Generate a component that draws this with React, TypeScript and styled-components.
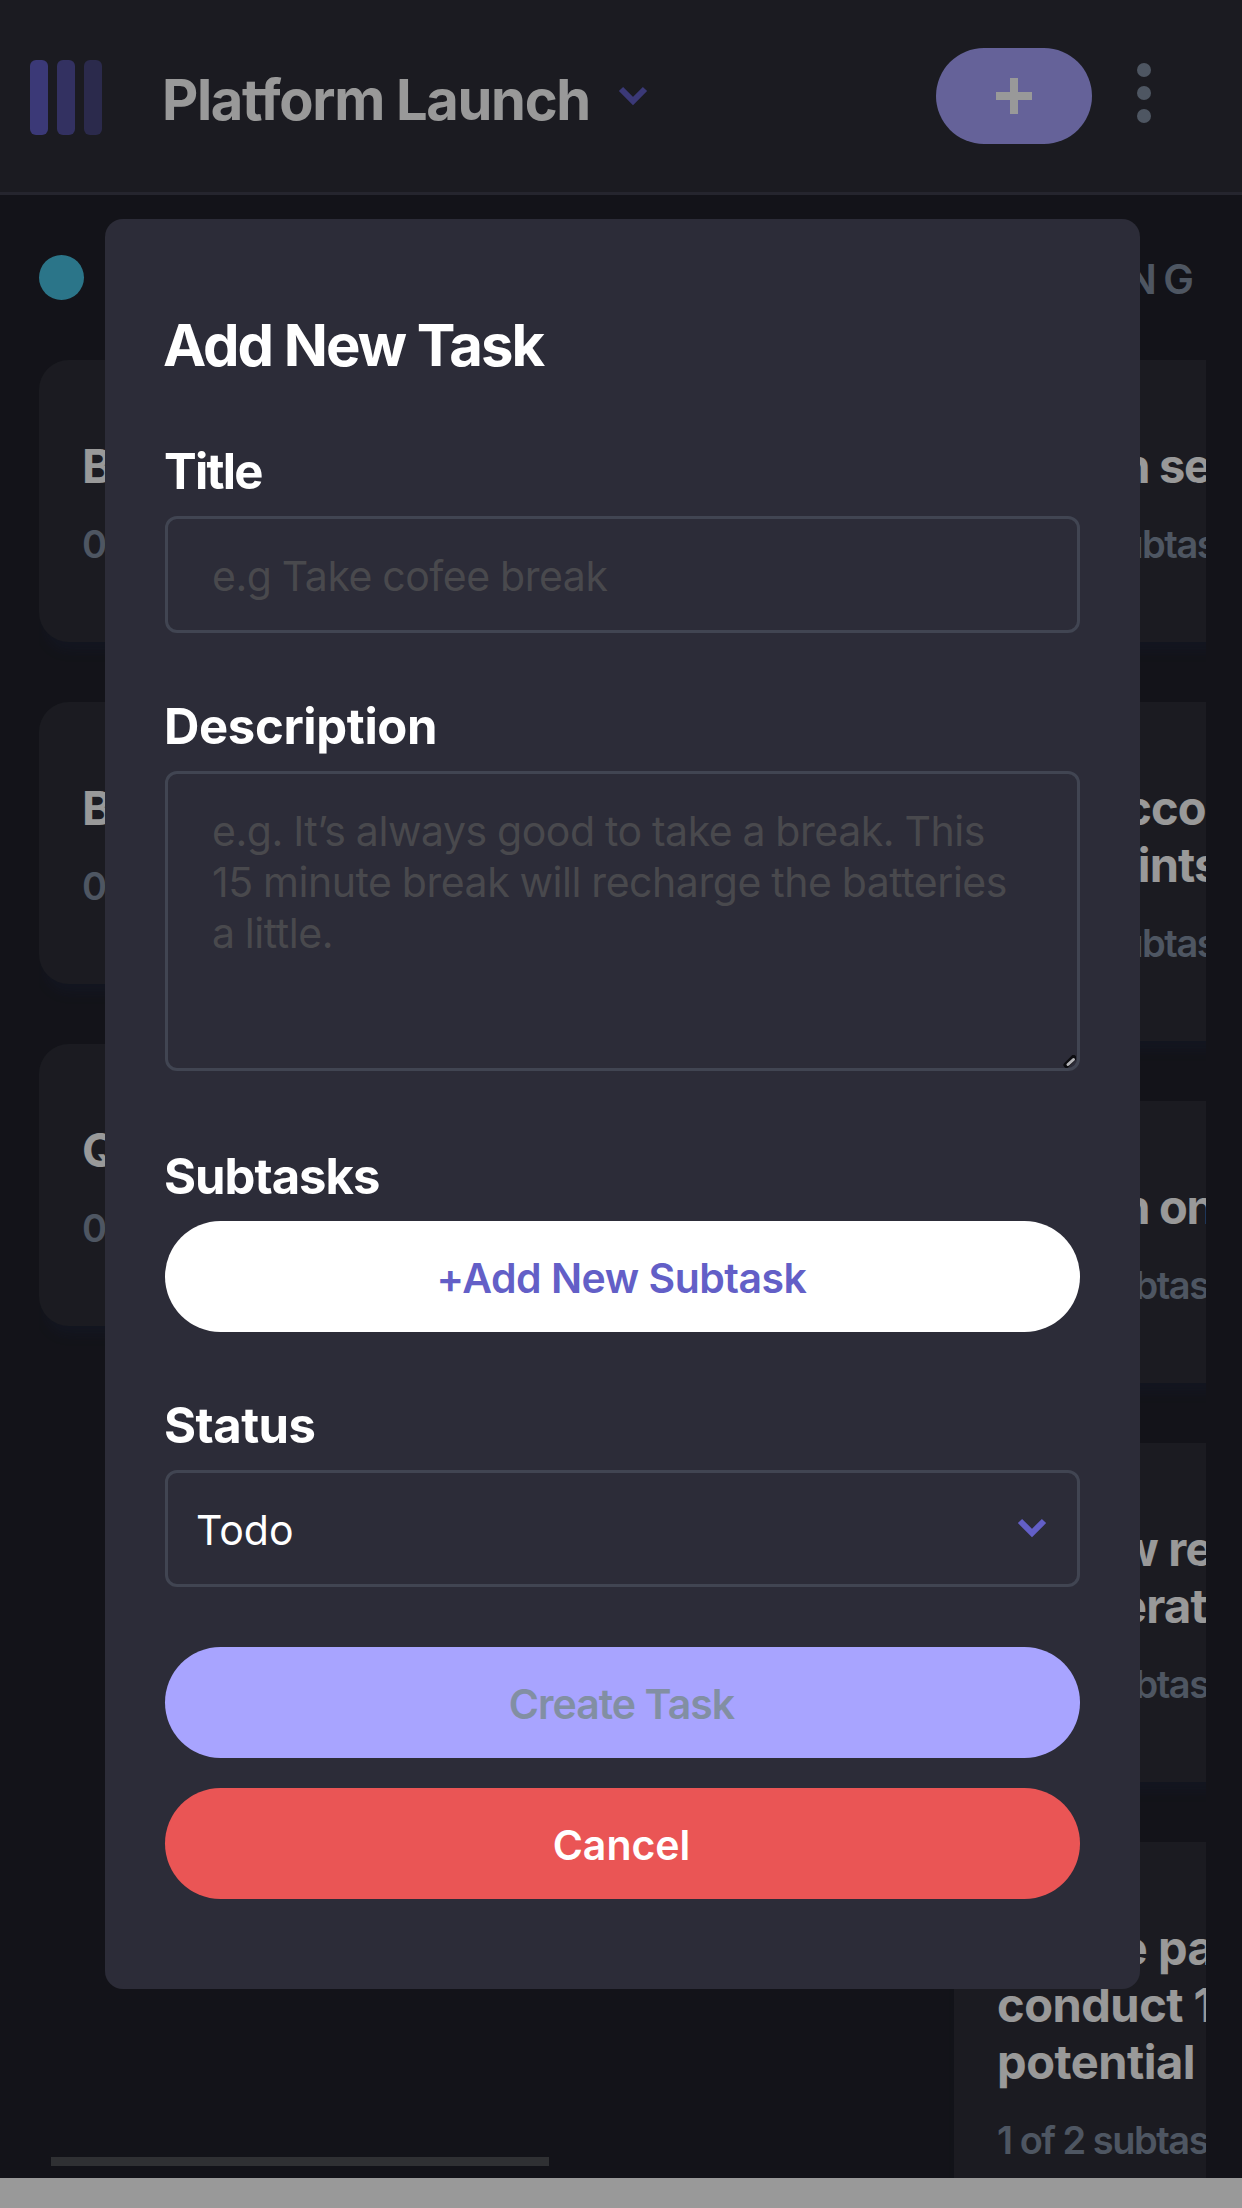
import React from 'react';
import styled, { createGlobalStyle } from 'styled-components';

const GlobalStyle = createGlobalStyle`
  *, *::before, *::after { box-sizing: border-box; }
  body {
    margin: 0;
    background: #ffffff;
    overflow: hidden;
    font-family: Inter, "Open Sans", sans-serif;
  }
  h1, h2, h3, p { margin: 0; }
  button, input, textarea { font-family: inherit; }
`;

const Page = styled.div`
  height: 2208px;
  overflow: hidden;
`;

const Header = styled.header`
  height: 195px;
  display: flex;
  align-items: center;
  padding: 0 91px 0 30px;
  background: #2d2e37;
  border-bottom: 3px solid #3e3f4e;
`;

const Logo = styled.div`
  display: flex;
  gap: 9px;
  margin: 3px 60px 0 0;
`;

const LogoBar = styled.span<{ $opacity: number }>`
  width: 18px;
  height: 75px;
  border-radius: 6px;
  background: #635fc7;
  opacity: ${(p) => p.$opacity};
`;

const BoardName = styled.h1`
  width: 429px;
  padding-top: 7px;
  margin-right: 27px;
  color: #ffffff;
  font-size: 56px;
  font-weight: 700;
  line-height: 66px;
  letter-spacing: -1.3px;
  white-space: nowrap;
`;

const HeaderActions = styled.div`
  display: flex;
  align-items: center;
  gap: 45px;
  margin-left: auto;
`;

const AddButton = styled.button`
  width: 156px;
  height: 96px;
  display: grid;
  place-items: center;
  padding: 0;
  border: 0;
  border-radius: 48px;
  background: #a8a4ff;
`;

const KebabIcon = styled.svg`
  display: block;
  margin-bottom: 6px;
`;

const Board = styled.main`
  position: relative;
  height: 1983px;
  padding: 60px 36px 0 39px;
  background: #20212a;
`;

const Columns = styled.div`
  height: 100%;
  display: flex;
  gap: 75px;
  overflow: hidden;
`;

const Column = styled.section`
  flex: 0 0 840px;
  display: flex;
  flex-direction: column;
  gap: 60px;
`;

const ColumnHeader = styled.div`
  height: 45px;
  display: flex;
  align-items: center;
  gap: 35px;
`;

const Dot = styled.span<{ $color: string }>`
  width: 45px;
  height: 45px;
  border-radius: 50%;
  background: ${(p) => p.$color};
`;

const ColumnTitle = styled.h2`
  padding-top: 3px;
  color: #828fa3;
  font-size: 41px;
  font-weight: 600;
  line-height: 48px;
  letter-spacing: 6.4px;
  white-space: nowrap;
`;

const Card = styled.article`
  flex: none;
  padding: 77px 45px 74px;
  border-radius: 30px;
  background: #2d2e37;
  box-shadow: 0 15px 12px -6px rgba(32, 48, 110, 0.18);
`;

const CardTitle = styled.h3<{ $tracking: number }>`
  color: #ffffff;
  font-size: 47px;
  font-weight: 700;
  line-height: 57px;
  letter-spacing: ${(p) => p.$tracking}px;
  margin-left: -2px;
  white-space: pre;
`;

const CardMeta = styled.p`
  margin: 26px 0 0 -2px;
  color: #828fa3;
  font-size: 38px;
  font-weight: 600;
  line-height: 48px;
  letter-spacing: -1.5px;
`;

const ScrollThumb = styled.div`
  position: absolute;
  left: 51px;
  bottom: 12px;
  width: 498px;
  height: 9px;
  background: #4f5055;
`;

const Overlay = styled.div`
  position: fixed;
  inset: 0;
  display: flex;
  align-items: center;
  justify-content: center;
  background: rgba(0, 0, 0, 0.4);
`;

const Modal = styled.form`
  width: 1035px;
  height: 1770px;
  display: flex;
  flex-direction: column;
  padding: 96px 60px 90px;
  margin-right: -3px;
  border-radius: 18px;
  background: #2c2c38;
`;

const ModalTitle = styled.h2`
  margin-bottom: 66px;
  color: #ffffff;
  font-size: 58px;
  font-weight: 700;
  line-height: 60px;
  letter-spacing: -2px;
  text-indent: -2px;
`;

const Field = styled.div<{ $after: number }>`
  display: flex;
  flex-direction: column;
  margin-bottom: ${(p) => p.$after}px;
`;

const Label = styled.label<{ $tracking: number }>`
  padding-top: 1px;
  margin-bottom: 14px;
  color: #ffffff;
  font-size: 49px;
  font-weight: 700;
  line-height: 60px;
  letter-spacing: ${(p) => p.$tracking}px;
  text-indent: -1px;
`;

const TextInput = styled.input`
  height: 117px;
  padding: 3px 45px 0 44px;
  border: 3px solid #414552;
  border-radius: 12px;
  background: transparent;
  color: #ffffff;
  font-size: 41px;
  letter-spacing: -0.45px;
  word-spacing: -0.8px;
  outline: none;
  &::placeholder { color: #49494d; opacity: 1; }
`;

const AreaFrame = styled.div`
  position: relative;
  height: 300px;
`;

const TextArea = styled.textarea`
  display: block;
  width: 100%;
  height: 300px;
  padding: 32px 56px 30px 44px;
  border: 3px solid #414552;
  border-radius: 12px;
  background: transparent;
  color: #ffffff;
  font-size: 41px;
  line-height: 51px;
  letter-spacing: -0.45px;
  word-spacing: -0.8px;
  outline: none;
  overflow: hidden;
  resize: none;
  &::placeholder { color: #49494d; opacity: 1; }
`;

const ResizeGrip = styled.svg`
  position: absolute;
  right: 4px;
  bottom: 3px;
`;

const PillButton = styled.button<{ $bg: string; $color: string; $tracking: number }>`
  height: 111px;
  padding: 3px 2px 0 0;
  border: 0;
  border-radius: 56px;
  background: ${(p) => p.$bg};
  color: ${(p) => p.$color};
  font-size: 41px;
  font-weight: 600;
  letter-spacing: ${(p) => p.$tracking}px;
`;

const Select = styled.div`
  height: 117px;
  display: flex;
  align-items: center;
  justify-content: space-between;
  padding: 0 30px 0 28px;
  border: 3px solid #414552;
  border-radius: 12px;
  color: #ffffff;
  font-size: 41px;
`;

const SelectValue = styled.span`
  padding-top: 3px;
  line-height: 51px;
`;

const Actions = styled.div`
  display: flex;
  flex-direction: column;
  gap: 30px;
`;

function Chevron() {
  return (
    <svg width="30" height="21" viewBox="0 0 10 7" fill="none" stroke="#635fc7" strokeWidth="2">
      <path d="m1 1 4 4 4-4" />
    </svg>
  );
}

interface Task {
  title: string;
  meta: string;
  tracking: number;
}

const todo: Task[] = [
  { title: 'Build UI for onboarding', meta: '0 of 3 subtasks', tracking: -0.6 },
  { title: 'Build UI for search', meta: '0 of 1 subtasks', tracking: -0.6 },
  { title: 'QA and test all major', meta: '0 of 2 subtasks', tracking: -0.6 },
];

const doing: Task[] = [
  { title: 'Design settings', meta: '2 of 3 subtasks', tracking: -1.3 },
  { title: 'Add account management\nendpoints', meta: '2 of 3 subtasks', tracking: -0.9 },
  { title: 'Design onboarding flow', meta: '1 of 3 subtasks', tracking: -1.3 },
  { title: 'Review results of usability\nand iterate', meta: '1 of 3 subtasks', tracking: -0.8 },
  {
    title: 'Create paper prototypes and\nconduct 10 usability tests\npotential customers',
    meta: '1 of 2 subtasks',
    tracking: -0.5,
  },
];

function BoardColumn({ name, color, tasks }: { name: string; color: string; tasks: Task[] }) {
  return (
    <Column>
      <ColumnHeader>
        <Dot $color={color} />
        <ColumnTitle>{`${name} (${tasks.length})`}</ColumnTitle>
      </ColumnHeader>
      {tasks.map((task) => (
        <Card key={task.title}>
          <CardTitle $tracking={task.tracking}>{task.title}</CardTitle>
          <CardMeta>{task.meta}</CardMeta>
        </Card>
      ))}
    </Column>
  );
}

export default function App() {
  return (
    <Page>
      <GlobalStyle />
      <Header>
        <Logo>
          <LogoBar $opacity={1} />
          <LogoBar $opacity={0.75} />
          <LogoBar $opacity={0.5} />
        </Logo>
        <BoardName>Platform Launch</BoardName>
        <Chevron />
        <HeaderActions>
          <AddButton type="button" aria-label="Add task">
            <svg width="36" height="36" viewBox="0 0 36 36" fill="#ffffff">
              <path d="M14 0h8v14h14v8H22v14h-8V22H0v-8h14z" />
            </svg>
          </AddButton>
          <KebabIcon width="14" height="60" viewBox="0 0 14 60" fill="#828fa3">
            <circle cx="7" cy="7" r="7" />
            <circle cx="7" cy="30" r="7" />
            <circle cx="7" cy="53" r="7" />
          </KebabIcon>
        </HeaderActions>
      </Header>

      <Board>
        <Columns>
          <BoardColumn name="TODO" color="#49c4e5" tasks={todo} />
          <BoardColumn name="DOING" color="#8471f2" tasks={doing} />
        </Columns>
        <ScrollThumb />
      </Board>

      <Overlay>
        <Modal>
          <ModalTitle>Add New Task</ModalTitle>
          <Field $after={63}>
            <Label $tracking={-1.8}>Title</Label>
            <TextInput placeholder="e.g Take cofee break" />
          </Field>
          <Field $after={75}>
            <Label $tracking={-0.36}>Description</Label>
            <AreaFrame>
              <TextArea placeholder="e.g. It’s always good to take a break. This 15 minute break will recharge the batteries a little." />
              <ResizeGrip width="13" height="13" viewBox="0 0 13 13" fill="none" strokeLinecap="round">
                <path d="M3.5 10 10.5 3" stroke="#0c0c10" strokeWidth="6" />
                <path d="M5 9.5 10.5 4.5" stroke="#b4b4b8" strokeWidth="3" />
              </ResizeGrip>
            </AreaFrame>
          </Field>
          <Field $after={63}>
            <Label $tracking={-1}>Subtasks</Label>
            <PillButton type="button" $bg="#ffffff" $color="#635fc7" $tracking={-0.5}>
              +Add New Subtask
            </PillButton>
          </Field>
          <Field $after={60}>
            <Label $tracking={-0.53}>Status</Label>
            <Select>
              <SelectValue>Todo</SelectValue>
              <Chevron />
            </Select>
          </Field>
          <Actions>
            <PillButton type="button" $bg="#a8a4ff" $color="#828fa3" $tracking={-0.95}>
              Create Task
            </PillButton>
            <PillButton type="button" $bg="#ea5555" $color="#ffffff" $tracking={0}>
              Cancel
            </PillButton>
          </Actions>
        </Modal>
      </Overlay>
    </Page>
  );
}
